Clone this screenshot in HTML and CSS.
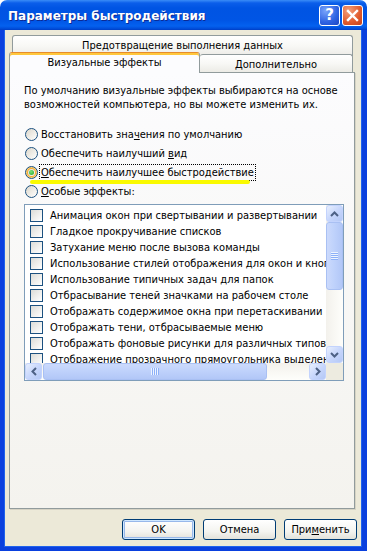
FILE: index.html
```html
<!DOCTYPE html>
<html>
	<head>
		<meta charset="UTF-8">
		<title>Параметры быстродействия</title>
		<link rel="stylesheet" href="styles.css">
	</head>
	<body>
		<div class="window">
			<div class="titlebar">
				<span class="caption">Параметры быстродействия</span>
				<span class="tbtn help">?</span>
				<span class="tbtn close">
					<svg width="13" height="13" viewBox="0 0 13 13"><path d="M2 2 L11 11 M11 2 L2 11" stroke="#fff" stroke-width="2.4" stroke-linecap="square"/></svg>
				</span>
			</div>
			<div class="client">
				<div class="tabs-back">
					<div class="tab tab-wide">Предотвращение выполнения данных</div>
				</div>
				<div class="tabs-front">
					<div class="tab tab-active">Визуальные эффекты</div>
					<div class="tab tab-normal">Дополнительно</div>
				</div>
				<div class="panel">
					<p class="note">По умолчанию визуальные эффекты выбираются на основе возможностей компьютера, но вы можете изменить их.</p>
					<div class="options">
						<div class="opt"><span class="radio"></span><span class="opt-text">Восстановить зна<u>ч</u>ения по умолчанию</span></div>
						<div class="opt"><span class="radio"></span><span class="opt-text">Обеспечить наилучший <u>в</u>ид</span></div>
						<div class="opt opt-marked"><span class="radio radio-on"></span><span class="opt-text opt-focus"><u>О</u>беспечить наилучшее быстродействие</span></div>
						<div class="opt"><span class="radio"></span><span class="opt-text"><u>О</u>собые эффекты:</span></div>
					</div>
					<div class="listbox">
						<div class="list">
							<div class="item"><span class="check"></span>Анимация окон при свертывании и развертывании</div>
							<div class="item"><span class="check"></span>Гладкое прокручивание списков</div>
							<div class="item"><span class="check"></span>Затухание меню после вызова команды</div>
							<div class="item"><span class="check"></span>Использование стилей отображения для окон и кнопок</div>
							<div class="item"><span class="check"></span>Использование типичных задач для папок</div>
							<div class="item"><span class="check"></span>Отбрасывание теней значками на рабочем столе</div>
							<div class="item"><span class="check"></span>Отображать содержимое окна при перетаскивании</div>
							<div class="item"><span class="check"></span>Отображать тени, отбрасываемые меню</div>
							<div class="item"><span class="check"></span>Отображать фоновые рисунки для различных типов папок</div>
							<div class="item"><span class="check"></span>Отображение прозрачного прямоугольника выделения</div>
						</div>
						<div class="vscroll">
							<span class="sbtn"><svg width="9" height="6" viewBox="0 0 9 6"><path d="M1 5 L4.5 1.5 L8 5" fill="none" stroke="#4D6185" stroke-width="2"/></svg></span>
							<span class="thumb thumb-v"><span class="grip-v"></span></span>
							<span class="sbtn sbtn-end"><svg width="9" height="6" viewBox="0 0 9 6"><path d="M1 1 L4.5 4.5 L8 1" fill="none" stroke="#4D6185" stroke-width="2"/></svg></span>
						</div>
						<div class="hscroll">
							<span class="sbtn"><svg width="6" height="9" viewBox="0 0 6 9"><path d="M5 1 L1.5 4.5 L5 8" fill="none" stroke="#4D6185" stroke-width="2"/></svg></span>
							<span class="thumb thumb-h"><span class="grip-h"></span></span>
							<span class="sbtn sbtn-end"><svg width="6" height="9" viewBox="0 0 6 9"><path d="M1 1 L4.5 4.5 L1 8" fill="none" stroke="#4D6185" stroke-width="2"/></svg></span>
						</div>
						<div class="corner"></div>
					</div>
				</div>
				<div class="buttons">
					<span class="btn btn-default">OK</span>
					<span class="btn">Отмена</span>
					<span class="btn">При<u>м</u>енить</span>
				</div>
			</div>
		</div>
	</body>
</html>
```

FILE: styles.css
```css
*{
	box-sizing: border-box;
	margin: 0;
	padding: 0;
}

body{
	background: #fff;
	font-family: "DejaVu Sans Condensed", "Liberation Sans", sans-serif;
	font-size: 11px;
	color: #000;
}

u{
	text-decoration: underline;
	text-underline-offset: 1px;
}

.window{
	width: 367px;
	height: 551px;
	display: flex;
	flex-direction: column;
}

/* заголовок окна */
.titlebar{
	height: 30px;
	flex: none;
	display: flex;
	align-items: center;
	padding: 1px 4px 0 8px;
	border-radius: 7px 7px 0 0;
	background: linear-gradient(#3A8CF7 0, #0B5EEA 3px, #0054E3 8px, #0055E5 20px, #0461EF 26px, #004AD6 29px, #003CC2 30px);
}
.caption{
	flex: 1;
	color: #fff;
	font-family: "DejaVu Sans", sans-serif;
	font-weight: bold;
	font-size: 12px;
	text-shadow: 1px 1px #0C2A93;
}
.tbtn{
	width: 21px;
	height: 21px;
	border: 1px solid #fff;
	border-radius: 3px;
	display: flex;
	align-items: center;
	justify-content: center;
}
.help{
	margin-right: 2px;
	background: radial-gradient(circle at 30% 25%, #79A5FB, #2E62E2 60%, #1C47C2);
	color: #fff;
	font-family: "DejaVu Sans", sans-serif;
	font-weight: bold;
	font-size: 15px;
	line-height: 15px;
}
.close{
	background: radial-gradient(circle at 30% 25%, #F4A07C, #E05A2C 60%, #C2421C);
}

.client{
	flex: 1;
	display: flex;
	flex-direction: column;
	background: #ECE9D8;
	border: solid #0A40DE;
	border-width: 0 5px 4px 4px;
	box-shadow: inset 1px 0 #1F63EC, inset -1px 0 #1F63EC, inset 0 -1px #1F63EC;
	padding: 5px 7px 0 5px;
}

/* вкладки */
.tabs-back{
	height: 17px;
	flex: none;
	padding: 0 2px 0 3px;
}
.tab{
	border: 1px solid #919B9C;
	border-bottom: none;
	border-radius: 3px 3px 0 0;
	background: linear-gradient(#fff, #F8F8F5 50%, #ECEBE6);
	text-align: center;
	line-height: 13px;
}
.tab-wide{
	height: 21px;
	padding-top: 3px;
}
.tabs-front{
	position: relative;
	display: flex;
	align-items: flex-end;
	height: 21px;
	flex: none;
	margin-bottom: -1px;
	padding-right: 2px;
}
.tab-active{
	width: 191px;
	height: 21px;
	background: #FCFCFE;
	border-top: 1px solid #E68B2C;
	box-shadow: inset 0 2px #FFC73C;
	padding-top: 3px;
}
.tab-normal{
	width: 153px;
	height: 18px;
	margin-bottom: 1px;
	border-left: none;
	padding-top: 3px;
}

.panel{
	flex: 1;
	border: 1px solid #919B9C;
	box-shadow: 1px 1px 0 #D6D3C4;
	background: linear-gradient(#FCFCFE, #F4F3EE);
	padding: 11px 14px 0;
}
.note{
	line-height: 14px;
}

.options{
	margin-top: 13px;
}
.opt{
	position: relative;
	display: flex;
	align-items: center;
	height: 19px;
}
.radio{
	flex: none;
	width: 13px;
	height: 13px;
	margin: 0 2px 0 1px;
	border: 1px solid #1C5180;
	border-radius: 50%;
	background: linear-gradient(135deg, #DCD7CB, #fff);
	display: flex;
	align-items: center;
	justify-content: center;
}
.radio-on{
	box-shadow: inset 0 0 0 1px #FCD57A, inset 0 0 0 2px #F3A834;
}
.radio-on:after{
	content: '';
	width: 5px;
	height: 5px;
	border-radius: 50%;
	background: radial-gradient(circle at 40% 35%, #7BE27B, #21A121);
}
.opt-text{
	padding: 0 1px;
	line-height: 15px;
}
.opt-focus{
	outline: 1px dotted #000;
	outline-offset: 0;
}
/* жёлтая пометка */
.opt-marked:after{
	content: '';
	position: absolute;
	left: 6px;
	top: 17px;
	width: 220px;
	height: 4px;
	border-radius: 2px;
	background: #FAFA00;
}

/* список флажков */
.listbox{
	display: grid;
	grid-template-columns: minmax(0, 1fr) 17px;
	grid-template-rows: minmax(0, 1fr) 17px;
	width: 320px;
	height: 177px;
	margin-top: 3px;
	border: 1px solid #7F9DB9;
	background: #fff;
}
.list{
	overflow: hidden;
	padding-top: 2px;
}
.item{
	display: flex;
	align-items: center;
	height: 16px;
	padding-left: 5px;
	white-space: nowrap;
}
.check{
	flex: none;
	width: 13px;
	height: 13px;
	margin-right: 7px;
	border: 1px solid #1C5180;
	background: linear-gradient(135deg, #DCDCD7, #fff);
}

.vscroll{
	display: flex;
	flex-direction: column;
	background: linear-gradient(to right, #F3F1EC, #FEFEFB);
}
.hscroll{
	display: flex;
	background: linear-gradient(#F3F1EC, #FEFEFB);
}
.sbtn{
	flex: none;
	width: 17px;
	height: 17px;
	border: 1px solid #C3D3FD;
	border-radius: 3px;
	background: linear-gradient(135deg, #E8EFFD, #C8D7FC 50%, #B4C8F6);
	display: flex;
	align-items: center;
	justify-content: center;
}
.sbtn-end{
	margin: auto 0 0 0;
}
.hscroll .sbtn-end{
	margin: 0 0 0 auto;
}
.thumb{
	flex: none;
	border: 1px solid #A9C0F3;
	border-radius: 3px;
	display: flex;
	align-items: center;
	justify-content: center;
}
.thumb-v{
	height: 68px;
	background: linear-gradient(to right, #CCDAFC, #BED1FB 50%, #B2C7F7);
}
.thumb-h{
	width: 224px;
	margin-left: 1px;
	background: linear-gradient(#CCDAFC, #BED1FB 50%, #B2C7F7);
}
.grip-v{
	width: 7px;
	height: 8px;
	background: repeating-linear-gradient(#EEF4FE 0 1px, #8CB0F8 1px 2px);
}
.grip-h{
	width: 8px;
	height: 7px;
	background: repeating-linear-gradient(to right, #EEF4FE 0 1px, #8CB0F8 1px 2px);
}
.corner{
	background: #EDEBE0;
}

/* кнопки */
.buttons{
	flex: none;
	display: flex;
	justify-content: flex-end;
	gap: 8px;
	height: 21px;
	margin: 10px -2px 7px 0;
}
.btn{
	width: 73px;
	height: 21px;
	border: 1px solid #003C74;
	border-radius: 3px;
	background: linear-gradient(#fff, #F4F4F0 60%, #E3E2DA);
	display: flex;
	align-items: center;
	justify-content: center;
}
.btn-default{
	box-shadow: inset 0 0 0 1px #CEE7FF, inset 0 0 0 2px #98B8EA;
}
```
